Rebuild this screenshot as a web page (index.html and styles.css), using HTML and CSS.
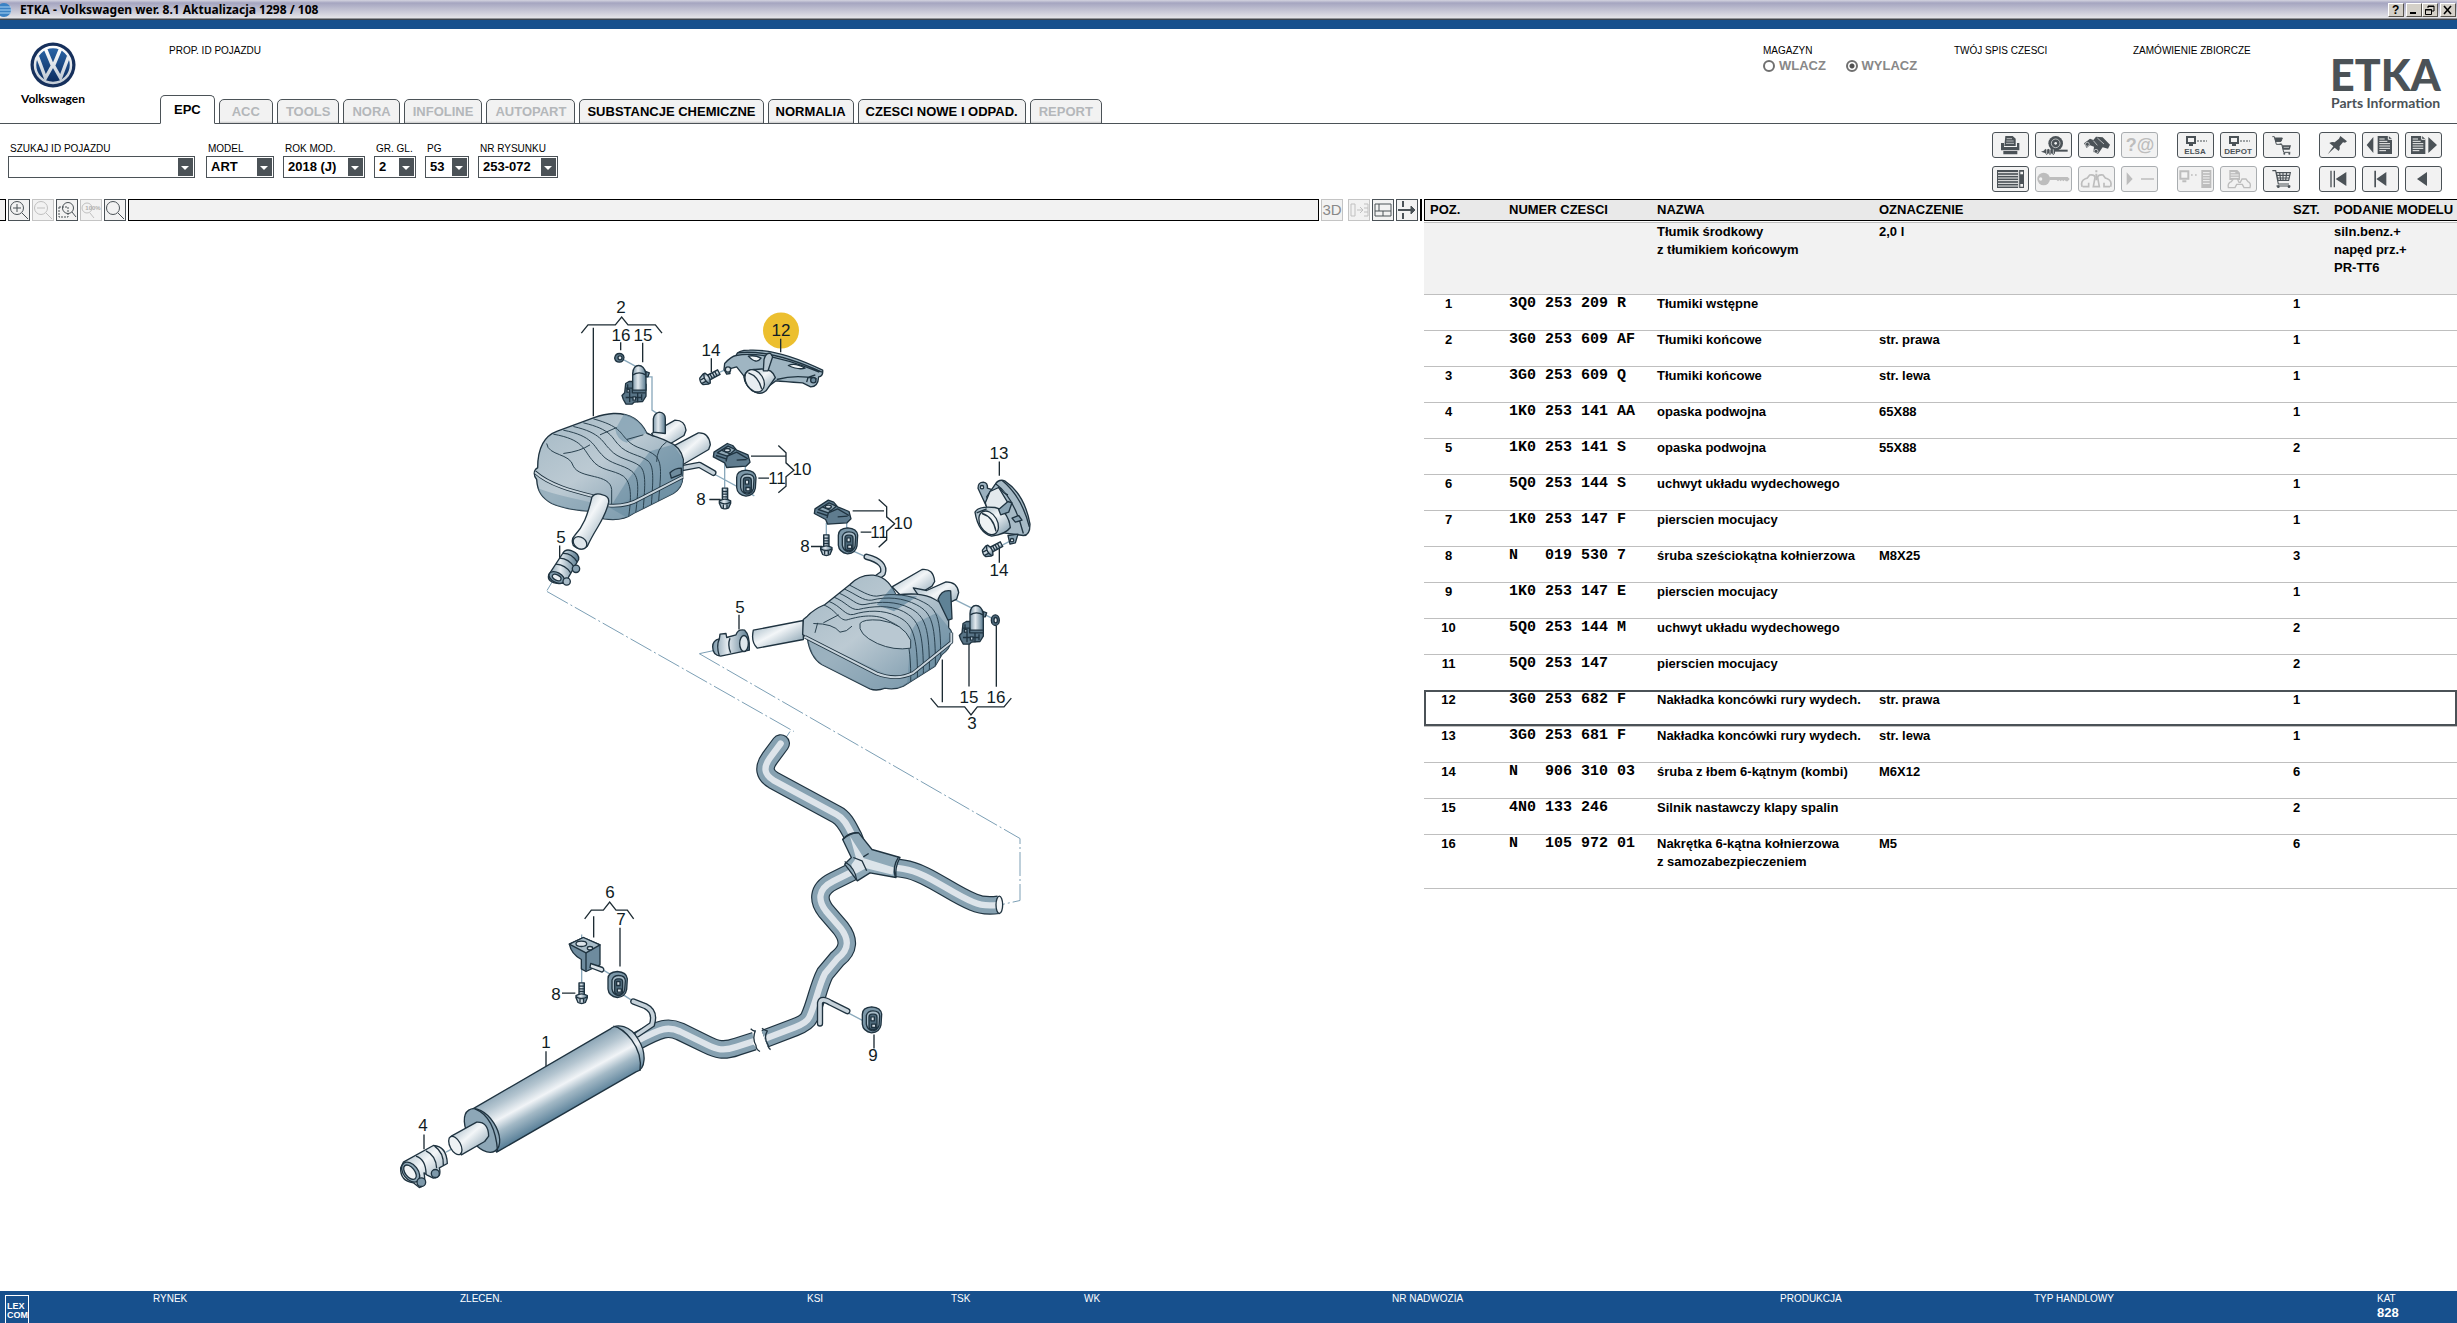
FILE: index.html
```html
<!DOCTYPE html>
<html lang="pl">
<head>
<meta charset="utf-8">
<title>ETKA - Volkswagen wer. 8.1 Aktualizacja 1298 / 108</title>
<link rel="stylesheet" href="styles.css">
</head>
<body>
<div class="titlebar">
  <svg class="globe" width="15" height="16" viewBox="0 0 15 16"><circle cx="7" cy="8" r="7" fill="#3b82c4"/><path d="M1 5h13M0 8h15M1 11h13" stroke="#a9d2f3" stroke-width="1"/></svg>
  <h1>ETKA - Volkswagen wer. 8.1 Aktualizacja 1298 / 108</h1>
  <div class="window-buttons">
    <button class="help" aria-label="Pomoc">?</button>
    <button aria-label="Minimalizuj"><svg width="12" height="10" viewBox="0 0 12 10"><path d="M2 8h6" stroke="#000" stroke-width="2"/></svg></button>
    <button aria-label="Przywróć"><svg width="12" height="10" viewBox="0 0 12 10"><path d="M4 3V1h6v5H8M4 1.5h6M1.500 4.500h6v5h-6zM1 5h7" fill="none" stroke="#000"/></svg></button>
    <button class="close" aria-label="Zamknij"><svg width="12" height="10" viewBox="0 0 12 10"><path d="M2 1l7 8M9 1L2 9" stroke="#000" stroke-width="1.600"/></svg></button>
  </div>
</div>

<header class="masthead">
  <div class="brand">
    <svg width="46" height="46" viewBox="0 0 46 46">
      <defs><linearGradient id="vw" x1="0" y1="0" x2="0" y2="1"><stop offset="0" stop-color="#2b66a8"/><stop offset="1" stop-color="#0b2a5c"/></linearGradient>
      <linearGradient id="chrome" x1="0" y1="0" x2="0" y2="1"><stop offset="0" stop-color="#fff"/><stop offset="1" stop-color="#c3ccd6"/></linearGradient></defs>
      <circle cx="23" cy="23" r="22.500" fill="#16305c"/>
      <circle cx="23" cy="23" r="18" fill="url(#vw)" stroke="url(#chrome)" stroke-width="2.500"/>
      <path d="M15.500 7L22 22.500h2L30.500 7M7.500 14.500L15.500 36L22 24.500h2L30.500 36L38.500 14.500" fill="none" stroke="url(#chrome)" stroke-width="3.400"/>
    </svg>
    <span>Volkswagen</span>
  </div>
  <div class="vehicle">
    <p class="caption">PROP. ID POJAZDU</p>
    <nav class="tabs">
      <button class="tab active">EPC</button>
      <button class="tab" disabled>ACC</button>
      <button class="tab" disabled>TOOLS</button>
      <button class="tab" disabled>NORA</button>
      <button class="tab" disabled>INFOLINE</button>
      <button class="tab" disabled>AUTOPART</button>
      <button class="tab">SUBSTANCJE CHEMICZNE</button>
      <button class="tab">NORMALIA</button>
      <button class="tab">CZESCI NOWE I ODPAD.</button>
      <button class="tab" disabled>REPORT</button>
    </nav>
  </div>
  <fieldset class="stock">
    <legend class="caption">MAGAZYN</legend>
    <label><input type="radio" name="stock"> WLACZ</label>
    <label><input type="radio" name="stock" checked> WYLACZ</label>
  </fieldset>
  <p class="caption">TWÓJ SPIS CZESCI</p>
  <p class="caption">ZAMÓWIENIE ZBIORCZE</p>
  <div class="etka"><strong>ETKA</strong><span>Parts Information</span></div>
</header>

<div class="controls">
  <form class="filters">
    <div class="field vin"><label for="vin">SZUKAJ ID POJAZDU</label><span class="pick"><select id="vin"><option></option></select></span></div>
    <div class="field model"><label for="model">MODEL</label><span class="pick"><select id="model"><option>ART</option></select></span></div>
    <div class="field year"><label for="year">ROK MOD.</label><span class="pick"><select id="year"><option>2018 (J)</option></select></span></div>
    <div class="field group"><label for="group">GR. GL.</label><span class="pick"><select id="group"><option>2</option></select></span></div>
    <div class="field sub"><label for="sub">PG</label><span class="pick"><select id="sub"><option>53</option></select></span></div>
    <div class="field plate"><label for="plate">NR RYSUNKU</label><span class="pick"><select id="plate"><option>253-072</option></select></span></div>
  </form>
  <div class="actions">
    <div class="action-group four">
      <button aria-label="Drukuj"><svg viewBox="3 3 105 72"><path d="M27 33h9v12h39V33h7v22H27zM34 57h42v10H34z"/><path d="M40 12h22l9 8v22H37z"/><path d="M44 20h16M43 27h22M42 34h24" class="cut thin"/></svg></button>
      <button aria-label="Części zużywalne"><svg viewBox="3 3 105 72"><circle cx="62" cy="34" r="22"/><circle cx="62" cy="34" r="13" class="cut thin"/><circle cx="62" cy="34" r="4" class="fillcut"/><path d="M28 53h70v6H28z"/><path d="M18 59l12-4V50l5 5 5-5 5 5 5-5 5 5 5-5v14l-5 5-5-5-5 5-5-5-5 5-5-6z"/><path d="M35 52v14M45 52v14M55 52v14" class="cut thin"/></svg></button>
      <button aria-label="Szukaj"><svg viewBox="3 3 105 72"><path d="M18 34l18-14 10 4 8-10 20 2 22 22-6 12-16-4-14 20-14-6 2-16-12-4-10 8z"/><circle cx="28" cy="37" r="6" class="cut thin"/><circle cx="54" cy="58" r="6" class="cut thin"/><path d="M46 26l12 14M58 18l20 18" class="cut thin"/></svg></button>
      <button disabled aria-label="Zapytanie"><svg viewBox="0 0 35 24"><text x="18" y="18" font-size="18" text-anchor="middle">?@</text></svg></button>
      <button aria-label="Lista"><svg viewBox="3 3 105 72"><path d="M15 12h81v54H15z"/><path d="M18 20h60M18 28h60M18 36h60M18 44h60M18 52h60M18 60h60M80 12v54" class="cut"/><path d="M85 17h8v8h-8zM85 54h8v8h-8z" class="fillcut"/></svg></button>
      <button disabled aria-label="Klucz"><svg viewBox="3 3 105 72"><circle cx="26" cy="39" r="19"/><circle cx="17" cy="39" r="5" class="fillcut"/><path d="M44 33h54l6 6-6 7h-5l-4-4-4 4-4-4-4 4-4-4-4 4-4-4H44z"/></svg></button>
      <button disabled aria-label="Informacja o pojeździe"><svg viewBox="3 3 105 72"><path d="M12 62q-5-18 10-24l6-2 7-9q20-2 15 13l-4 22h18l-4-22q-5-15 15-13l7 9 6 2q15 6 10 24M14 62h18v-12M96 62H78v-12" class="line" stroke-width="5"/><path d="M52 13h6v6h-6zM52 23h6v20h-6z"/></svg></button>
      <button disabled aria-label="Dalej"><svg viewBox="3 3 105 72"><path d="M17 19l18 20-18 19zM60 37h39v4H60z"/></svg></button>
    </div>
    <div class="action-group three">
      <button aria-label="ELSA"><svg viewBox="0 0 35 24"><path d="M9 4h8v6H9zM11 12h4" class="line" stroke-width="2"/><path d="M19 8h10" class="line" stroke-dasharray="2 1" stroke-width="1"/><text x="17" y="21" font-size="8" text-anchor="middle">ELSA</text></svg></button>
      <button aria-label="DEPOT"><svg viewBox="0 0 35 24"><path d="M9 4h8v6H9zM11 12h4" class="line" stroke-width="2"/><path d="M19 8h10" class="line" stroke-dasharray="2 1" stroke-width="1"/><text x="17" y="21" font-size="8" text-anchor="middle">DEPOT</text></svg></button>
      <button aria-label="Przenieś koszyk"><svg viewBox="3 3 105 72"><path d="M28 14h6l6 23h16M36 18h22l-4 10H38z" class="line" stroke-width="3"/><path d="M36 18h22l-4 11H38z"/><path d="M50 36h6l6 25h20" class="line" stroke-width="3"/><path d="M57 40h27l-4 13H60z"/><path d="M62 46h16" class="cut thin"/><circle cx="64" cy="65" r="3"/><circle cx="79" cy="65" r="3"/></svg></button>
      <button disabled aria-label="Serwer"><svg viewBox="3 3 105 72"><path d="M10 16h24v22H10zM16 46h12" class="line" stroke-width="6"/><path d="M42 25h5v4h-5zM54 25h5v4h-5zM73 12h30v54H73z"/><path d="M78 20h20M78 28h20M78 36h20M78 44h20M78 52h20" class="cut"/></svg></button>
      <button disabled aria-label="Dokument pojazdu"><svg viewBox="3 3 105 72"><path d="M28 12h24l8 8v22H28z"/><path d="M32 20h14M32 27h24M32 34h24" class="cut"/><path d="M25 65q-3-14 9-18l6-8h12l5 10h4l5-10h12l6 8q10 4 6 18H72l-5-10H50l-5 10z" class="fillcut line" stroke-width="4"/></svg></button>
      <button aria-label="Koszyk"><svg viewBox="3 3 105 72"><path d="M28 14h10l8 40h32M40 20h42l-5 23H45zM50 20l3 23M60 20v23M71 20l-3 23M42 28h38M43 36h36M40 60h42" class="line" stroke-width="3.500"/><circle cx="46" cy="62" r="4"/><circle cx="78" cy="62" r="4"/></svg></button>
    </div>
    <div class="action-group three">
      <button aria-label="Przypnij"><svg viewBox="3 3 105 72"><path d="M64 12l20 16-6 4-6-1-10 12q2 9-3 14L47 47 26 67l17-24-12-10q8-5 16-2l13-11z"/></svg></button>
      <button aria-label="Poprzedni dokument"><svg viewBox="3 3 105 72"><path d="M14 39l20-24v48zM47 12h33l10 9v45H47z"/><path d="M52 21h16M52 28h24M52 35h32M52 42h32M52 49h32M52 56h20M79 12v10h11" class="cut"/></svg></button>
      <button aria-label="Następny dokument"><svg viewBox="3 3 105 72"><path d="M96 39L70 15v48zM18 12h33l10 9v45H18z"/><path d="M23 21h16M23 28h24M23 35h32M23 42h32M23 49h32M23 56h20M50 12v10h11" class="cut"/></svg></button>
      <button aria-label="Początek"><svg viewBox="3 3 105 72"><path d="M34 14h4v50h-4zM44 14h4v50h-4zM50 39l32-21v42z"/></svg></button>
      <button aria-label="Pierwszy"><svg viewBox="3 3 105 72"><path d="M37 14h5v50h-5zM43 39l30-21v42z"/></svg></button>
      <button aria-label="Wstecz"><svg viewBox="3 3 105 72"><path d="M36 39l30-21v42z"/></svg></button>
    </div>
  </div>
</div>

<main>
  <section class="viewer">
    <div class="viewer-bar">
      <span class="stub"></span>
      <button aria-label="Powiększ"><svg viewBox="0 0 20 20"><circle cx="8" cy="8" r="6.500"/><path d="M13 13l6 6M8 4v8M4 8h8"/></svg></button>
      <button disabled aria-label="Pomniejsz"><svg viewBox="0 0 20 20"><circle cx="8" cy="8" r="6.500"/><path d="M13 13l6 6M4 8h8"/></svg></button>
      <button aria-label="Powiększ obszar"><svg viewBox="0 0 20 20"><path d="M2 7h9v10H2z" stroke-dasharray="2 1"/><circle cx="11" cy="8" r="5.500"/><path d="M15 12l4 5"/></svg></button>
      <button disabled aria-label="Skala 100%"><svg viewBox="0 0 20 20"><circle cx="6" cy="8" r="5"/><path d="M9 13l4 5"/><text x="12" y="10" font-size="6" text-anchor="middle">100%</text></svg></button>
      <button aria-label="Dopasuj"><svg viewBox="0 0 20 20"><circle cx="8" cy="8" r="6.500"/><path d="M13 13l6 6"/></svg></button>
      <span class="status"></span>
      <button class="plain" disabled>3D</button>
      <button disabled aria-label="Ukryj listę"><svg viewBox="0 0 20 20"><path d="M2 4h4v12H2zM8 10h5M11 7l3 3-3 3M15 4h4v12h-4M15 8h4M15 12h4"/></svg></button>
      <button aria-label="Układ okien"><svg viewBox="0 0 20 20"><path d="M2 4h16v12H2zM2 11h16M10 11v5M6 4v7"/></svg></button>
      <button aria-label="Przesuń podział"><svg viewBox="0 0 20 20"><path d="M1 10h15M6 1v6M6 13v6" stroke-width="2"/><path d="M14 6l4 4-4 4z" fill="#4b5257"/></svg></button>
      <span class="splitter"></span>
    </div>
    <svg class="diagram" viewBox="0 222 1424 1069" role="img" aria-label="Układ wydechowy">
      <defs>
        <linearGradient id="tube" x1="0" y1="0" x2="1" y2="1"><stop offset="0" stop-color="#8fa9b8"/><stop offset=".45" stop-color="#f3f6f8"/><stop offset="1" stop-color="#7593a5"/></linearGradient>
        <linearGradient id="shell" x1="0" y1="0" x2="1" y2="1"><stop offset="0" stop-color="#a3b8c4"/><stop offset=".45" stop-color="#bccad3"/><stop offset="1" stop-color="#6d8fa4"/></linearGradient>
        <linearGradient id="cyl" gradientUnits="userSpaceOnUse" x1="470" y1="325" x2="548" y2="467"><stop offset="0" stop-color="#86a1b2"/><stop offset=".25" stop-color="#b4c5d0"/><stop offset=".5" stop-color="#f1f4f7"/><stop offset=".7" stop-color="#a3b9c6"/><stop offset="1" stop-color="#587f98"/></linearGradient>
        <linearGradient id="metal" x1="0" y1="0" x2="1" y2="0"><stop offset="0" stop-color="#7d98a9"/><stop offset=".4" stop-color="#e3eaef"/><stop offset="1" stop-color="#56788d"/></linearGradient>
        <g id="bolt" class="ink" fill="url(#metal)"><path d="M-8-30h16v36h-16z"/><path d="M-8-20h16M-8-12h16M-8-4h16" fill="none"/><path d="M-17 8q17-10 34 0v7l-6 14q-11 6-22 0l-6-14z"/><path d="M-17 12q17 10 34 0M-5 16v14M6 16v14" fill="none"/></g>
        <g id="grommet" class="ink"><path d="M-30-18q0-20 28-22q28 2 30 22l-2 32q-4 22-28 24q-26-4-28-26z" fill="#7b97a8"/><path d="M-18-14q4-14 20-14q20 0 20 16l-2 28q-6 16-20 16q-16-4-18-20z" fill="#a9bdc9"/><rect x="-10" y="-18" width="24" height="46" rx="9" fill="#4d697a"/><path d="M-4-10h10v12h-10zM-2 12h12v10h-12z" fill="#d7e0e6"/></g>
        <g id="hanger" class="ink"><path d="M0 20l2-14 40-26 16 6 12 14 34 14 6 22-12 12-58 4-6-14z" fill="#5f7c8f"/><path d="M12 8l32-20 22 10-24 20z" fill="#8fa7b5"/><path d="M42 18l28-12 34 20M42 18l-4 16M70 30l30-2M8 16l30 10M24 0l28 12" fill="none"/><ellipse cx="42" cy="0" rx="9" ry="5" fill="#d3dde4"/></g>
        <g id="valve" class="ink"><path d="M-8 20l10-6h40l11 8v36l-10 16-26 2-6 6h-18l-8-14-4-12 8-8z" fill="#587486"/><path d="M13-10q2-24 18-24t22 24v50h-40z" fill="url(#metal)"/><path d="M14-6q18-12 38 0M-8 34h20v14h40M4 46v30M28 48v28M-8 62h46M40 52v18M-2 22v26" fill="none"/><path d="M-4 38h8v8h-8zM14 60h8v10h-8z" fill="#c2cfd8"/><path d="M53-16l10 4-4 12h-6z" fill="#6c8798"/></g>
        <g id="clamp" class="ink"><path d="M-46 34L-4-30Q4-46 24-38Q46-30 44-12L14 40Q8 62-16 60Q-52 56-46 34Z" fill="url(#metal)"/><ellipse cx="-22" cy="42" rx="25" ry="15" transform="rotate(28 -22 42)" fill="#7f9aab"/><ellipse cx="-22" cy="42" rx="14" ry="8" transform="rotate(28 -22 42)" fill="#e8edf1"/><path d="M-4-30q26-2 44 26M-24 2q28 2 44 26M-12-16q26 2 42 26" fill="none"/><circle cx="36" cy="16" r="11" fill="#89a2b2"/><circle cx="8" cy="54" r="11" fill="#a9bcc8"/></g>
        <g id="pipes" fill="none">
          <path d="M662 72L630 115C608 145 614 166 640 182L830 285C855 298 865 325 880 352L905 415" stroke-linecap="round"/>
          <path d="M905 420C950 440 990 442 1030 448C1100 458 1170 520 1240 548Q1270 562 1316 556"/>
          <path d="M900 445L820 485C770 510 775 545 798 575L842 626C868 660 868 690 832 718L795 762C775 800 768 850 748 893Q740 910 705 923L614 958"/>
          <path d="M586 964L530 982C490 996 470 990 440 975L360 936C325 920 305 925 230 965"/>
        </g>
        <clipPath id="leftBody"><path id="leftShape" d="M113 535C100 540 100 560 110 570C112 605 125 625 155 642C185 656 225 662 265 665L312 688Q365 697 400 672L520 612Q550 592 548 560L550 510Q542 470 505 457C475 442 455 440 440 430C420 390 390 370 340 372Q315 373 280 385L172 425C130 440 113 480 113 535Z"/></clipPath>
        <clipPath id="rightBody"><path id="rightShape" d="M340 600L352 590Q370 570 405 555L480 495Q510 464 550 467C590 472 605 500 618 526C660 522 700 520 735 540Q770 555 776 600L776 625Q792 640 784 665Q778 690 756 705L735 740L640 800Q615 812 585 806Q560 816 540 808L395 735Q360 712 352 655L338 645Z"/></clipPath>
      </defs>

      <circle cx="781" cy="331" r="18" fill="#ecbf2f"/>

      <g class="dash">
        <path d="M547 592L794 732"/><path d="M699 654L1020 839V901L1002 905"/><path d="M790 732L786 738M547 591L556 576M700 654L714 651"/>
      </g>

      <g transform="translate(500 290) scale(.333333)">
        <g class="leader"><path d="M244 131l20-25h82l19-23 19 23h82l20 25M280 115v265M362 158v24M428 160v58M634 206v42M842 148v40M753 500h104M835 468l23 22v30l24 22-24 20v28l-23 20M775 566h32M628 630h34M179 768v44"/></g>
        <g class="guide"><path d="M366 208l40 22M440 262h16v100l40 26M674 510v85M736 520v26M645 555l118 64M660 248l26-12"/></g>
        <g class="ink">
          <path d="M455 432l70-40q30 0 33 30l-6 16-70 42z" fill="url(#tube)"/>
          <path d="M460 428v-40q2-16 18-20 18 2 18 20v44z" fill="url(#metal)"/>
          <path d="M520 470l75-40q32-2 36 36l-5 14-82 48z" fill="url(#tube)"/>
          <path d="M550 535L598 526L640 550" class="rod-edge"/><path d="M550 535L598 526L640 550" class="rod"/>
          <use href="#leftShape" fill="url(#shell)"/>
        </g>
        <g clip-path="url(#leftBody)">
          <path d="M380 360q40 20 60 70l-60 30q-30-10-34-40z" fill="#7f9eb1" opacity=".7"/>
          <path d="M100 590C170 620 240 630 280 640L330 655L550 560V720H100z" fill="#7a99ac" opacity=".5"/>
          <path d="M330 655l50-80 70-90 70-20 40 60-20 90-140 80z" fill="#5f859b" opacity=".5"/>
          <path d="M140 462C145 500 210 490 220 530C240 570 330 550 335 600V650" class="fine"/>
          <g class="fine">
            <path d="M160 434C250 450 250 480 275 510C300 545 340 540 370 560C395 580 395 620 385 690"/>
            <path d="M190 422C280 440 280 470 305 495C330 525 370 525 395 545C420 565 415 600 405 690"/>
            <path d="M220 411C305 430 308 460 330 480C355 510 395 510 420 530C440 550 435 590 428 680"/>
            <path d="M250 400C335 420 335 445 355 465C380 495 420 495 445 515C465 535 458 580 452 680"/>
            <path d="M280 388C360 410 360 430 380 450C405 480 440 475 468 500C490 525 480 570 474 660"/>
            <path d="M190 492q50-6 80-26M300 436l50-22M380 450l50-14"/>
            <path d="M500 457q-30 20-30 60"/>
          </g>
        </g>
        <g class="ink" fill="none"><path d="M105 548C150 588 220 605 280 620M325 648Q380 652 420 628L548 562" class="seam-edge"/><path d="M105 548C150 588 220 605 280 620M325 648Q380 652 420 628L548 562" class="seam"/></g>
        <g class="ink"><path d="M276 622q10-14 32-6 20 4 18 22C315 690 290 710 262 770q-20 18-42-2-8-18 4-30C250 710 262 680 276 622z" fill="url(#tube)"/><ellipse cx="240" cy="760" rx="22" ry="17" transform="rotate(35 240 760)" fill="#dfe6eb"/>
        <path d="M510 550q14-14 34-14v18l-30 12z" fill="#6f8c9e"/></g>
        <use href="#clamp" x="192" y="822"/>
        <use href="#valve" x="385" y="262"/>
        <g class="ink"><path d="M344 206q2-14 14-14t14 12q-2 14-14 14t-14-12z" fill="#5d798a"/><circle cx="360" cy="205" r="6" fill="#dbe3e8"/>
          <path d="M674 222q20-22 34-24 4-16 40-16 90-4 220 60 2 18-12 20-2 30-24 30l-24-12q-60-4-80-6l-22 16q-20 24-40 18-26-8-34-48l-22-28-22 6 2 14-10 2-8-14z" fill="#9fb5c2"/>
          <path d="M708 198q90-16 250 50M712 190q100-12 254 58M830 270q60-16 120-2M920 278l4-14 22-8" fill="none"/>
          <path d="M745 200q20-4 38 6-14 20-38-6zM865 228q20-10 50 8-20 6-50-8z" fill="#f3f6f8"/>
          <path d="M732 262q6-24 34-22 50-8 60 24l-28 40q-20 16-44-4-20-16-22-38z" fill="url(#tube)"/>
          <ellipse cx="764" cy="274" rx="26" ry="36" transform="rotate(-32 764 274)" fill="#e8edf1"/><path d="M745 250q30 10 40 48" fill="none"/>
          <path d="M792 210q6-22 20-18l6 10-14 42h-14z" fill="#b7c7d1"/><circle cx="684" cy="240" r="8" fill="#d6dfe5"/><circle cx="940" cy="272" r="8" fill="#6f8da0"/></g>
        <use href="#bolt" transform="translate(630 262) rotate(62)"/>
        <use href="#hanger" x="640" y="482"/><use href="#grommet" x="740" y="582"/><use href="#bolt" x="675" y="626"/>
      </g>

      <g transform="translate(690 420) scale(.333333)">
        <g class="leader"><path d="M488 274h94M566 240l24 22v30l24 21-24 22v26l-24 22M512 338h32M363 381h34M147 586v44M928 126v43M928 385v45M757 720v128M837 665v136M919 618v184M722 836l22 26h80l19 24 19-24h80l22-26"/></g>
        <g class="guide"><path d="M409 310v45M470 310v24M490 395l40 18M790 538l120 60M938 376l24-12"/></g>
        <g class="ink">
          <path d="M530 412Q590 428 578 462L556 478" class="rod-edge"/><path d="M530 412Q590 428 578 462L556 478" class="rod"/>
          <path d="M606 502l90-52q34-4 38 36l-8 14-76 46z" fill="url(#tube)"/>
          <path d="M670 505l40 8 58-26q34 0 38 32l-6 20-80 40z" fill="url(#tube)"/>
          <path d="M190 632L340 603V660L202 686Q182 668 190 632z" fill="url(#tube)"/>
          <use href="#rightShape" fill="url(#shell)"/>
          <path d="M744 540q10-30 38-26l4 84-12 4z" fill="#5f8296"/>
        </g>
        <g clip-path="url(#rightBody)">
          <path d="M560 556l52-60 10 30 60 5-70 44z" fill="#6b8fa4" opacity=".8"/>
          <path d="M352 655l260 120 60-8 110-120v160H352z" fill="#7b99ab" opacity=".5"/>
          <path d="M660 680q-10-30 20-70l60-30 50 60-50 110-90 60z" fill="#5f859b" opacity=".45"/>
          <g class="fine">
            <path d="M400 556C440 570 450 610 475 600C510 590 560 580 600 606C640 625 665 640 662 800"/>
            <path d="M415 545C455 560 465 590 490 585C530 572 580 570 620 590C665 610 685 640 682 790"/>
            <path d="M430 532C470 548 480 572 505 570C545 560 600 555 640 576C685 600 702 630 700 780"/>
            <path d="M445 520C485 536 500 560 525 555C570 545 620 545 660 566C705 590 720 620 718 770"/>
            <path d="M460 507C500 525 520 545 545 542C590 530 640 535 680 556C725 580 738 610 736 760"/>
            <path d="M475 495C515 515 535 530 560 530C610 520 660 525 700 548C745 570 754 600 752 750"/>
          </g>
          <path d="M510 612q10-14 60-10 70 10 92 60v24q-50 8-100-14-60-28-52-60z" fill="#b9c8d2" stroke="#29404e" stroke-width="3"/>
          <path d="M370 612q60 0 80 26 20 0 36-18M375 640l8-30M400 610l46-24" class="fine"/>
        </g>
        <g class="ink" fill="none"><path d="M345 652L560 762Q620 785 670 760L784 668V640" class="seam-edge"/><path d="M345 652L560 762Q620 785 670 760L784 668V640" class="seam"/></g>
        <g class="ink"><path d="M68 682q0-20 20-24l2-14 18-2 2 12 28-8q6-18 26-14 16 14 14 60l-86 18q-24-2-24-28z" fill="url(#metal)"/><ellipse cx="162" cy="672" rx="13" ry="24" fill="#dfe7ec"/><path d="M88 658q-10 20 0 52M120 656q-8 20 2 44" fill="none"/>
          <path d="M864 206q0-18 16-18 14 2 12 18l26 8-30 44z" fill="#9ab0be"/><circle cx="876" cy="203" r="5" fill="#e5ebef"/><path d="M890 232l26-38q10-16 28-10 60 40 76 130 0 34-20 34l-60-8z" fill="#a6bac6"/><path d="M916 192q56 40 84 150M936 182q60 50 82 140" fill="none"/><path d="M886 250l14-34 26-12 30 50-20 60-40-30z" fill="#e3e9ed"/>
          <path d="M855 278q10-20 60-14 40 10 46 60-14 20-56 26-40-10-50-72z" fill="url(#tube)"/><ellipse cx="896" cy="310" rx="26" ry="38" transform="rotate(-30 896 310)" fill="#eef2f4"/><path d="M876 282q34 10 42 54M860 280l30-12" fill="none"/>
          <path d="M926 270l28-24 12 4-10 28-24 8zM966 296l20-8 10 14-20 6zM930 206q10 16 24 20M954 348l30-4-8 26-16 4z" fill="#89a3b3"/><circle cx="966" cy="362" r="5" fill="#e5ebef"/>
          <ellipse cx="916" cy="602" rx="12" ry="16" fill="#4e6b7d"/><ellipse cx="917" cy="602" rx="5" ry="8" fill="#e5ebef"/></g>
        <use href="#valve" x="827" y="592"/>
        <use href="#bolt" transform="translate(908 388) rotate(62)"/>
        <use href="#hanger" x="373" y="262"/><use href="#grommet" x="475" y="365"/><use href="#bolt" x="409" y="376"/>
      </g>

      <g transform="translate(560 720) scale(.333333)">
        <g class="leader"><path d="M74 598l20-26h36l19-24 19 24h34l19 26M101 590v64M180 625v116M6 821h40M942 945v42"/></g>
        <g class="guide"><path d="M65 645v145M130 752l24 14M190 826l28 18M860 878l50 26"/></g>
        <use href="#pipes" stroke="#1f3340" stroke-width="56"/>
        <use href="#pipes" stroke="#86a1b1" stroke-width="49"/>
        <use href="#pipes" stroke="#dde4ea" stroke-width="19"/>
        <g class="ink"><path d="M848 360q20-24 48-20l40 50 84 24q-16 30-12 60l-78-14-38 24-38-50 20-20z" fill="#8fa9b8"/><path d="M870 350l42 66 90 28-4 22-80-20-36 20-8-30 14-20z" fill="#dce4ea" stroke="none"/><path d="M848 360q24-22 48-20M1016 412q-20 30-10 62M854 426q32 20 36 56M880 414l26 10 14 30M910 412l16-10" fill="none"/></g>
        <ellipse cx="1318" cy="556" rx="10" ry="26" class="ink" fill="#f4f6f8"/>
        <path d="M572 928q14 12 34-2-8 20 4 40 2 16 12 26-16-8-32 4-2-16-12-24 6-24-6-44z" fill="#fff"/><path d="M572 928q8 8 14 6-10 24 2 44 0 12 12 18M606 926q10 8 16 8-12 20 2 42 2 12 8 14" fill="none" class="ink"/>
        <path d="M220 846L256 860Q288 876 276 915L232 945" class="rod-edge"/><path d="M220 846L256 860Q288 876 276 915L232 945" class="rod"/>
        <path d="M780 912V850Q784 832 812 850L862 875" class="rod-edge"/><path d="M780 912V850Q784 832 812 850L862 875" class="rod"/>
        <g class="ink"><path d="M28 674l42-20 50 22v60l-42 20-14-8v-28q-30-16-36-46z" fill="#6e8b9e"/><path d="M28 674l42-20 50 22-42 24z" fill="#a8bcc8"/><path d="M78 700v54" fill="none"/><ellipse cx="64" cy="673" rx="16" ry="8" fill="#dce4ea"/><ellipse cx="90" cy="686" rx="8" ry="5" fill="#dce4ea"/><path d="M92 732l36 12q8 8-2 14l-36-14z" fill="#dce4ea"/></g>
        <use href="#grommet" x="174" y="796"/><use href="#bolt" x="65" y="820"/><use href="#grommet" x="937" y="902"/>
      </g>

      <g transform="translate(380 960) scale(.333333)">
        <g class="leader"><path d="M498 275v45M132 525v44"/></g>
        <path d="M198 578l34-18" class="guide"/>
        <g class="ink">
          <path d="M272 452L690 209C710 190 752 198 775 240C800 280 798 330 768 337L350 578Z" fill="url(#cyl)"/>
          <path d="M700 200C730 205 790 260 780 334" fill="none"/>
          <ellipse cx="306" cy="513" rx="73" ry="42" transform="rotate(57 306 513)" fill="#8da7b7"/>
          <path d="M285 448q60 24 68 128" fill="none"/>
          <path d="M214 530L290 488Q325 486 326 530L314 546L244 586Z" fill="url(#tube)"/>
          <ellipse cx="226" cy="558" rx="16" ry="30" transform="rotate(-28 226 558)" fill="#eef2f4"/>
          <path d="M70 608L160 558Q200 560 202 612L178 625Q186 655 160 656L140 646L132 640Q140 680 118 684L100 670Q60 665 62 625Z" fill="url(#tube)"/>
          <ellipse cx="92" cy="638" rx="22" ry="34" transform="rotate(-38 92 638)" fill="#8fa8b7"/><ellipse cx="90" cy="638" rx="14" ry="25" transform="rotate(-38 90 638)" fill="#f1f4f6"/>
          <path d="M108 590q30 10 30 54M138 574q30 14 32 52M164 560q28 20 26 58" fill="none"/><circle cx="124" cy="668" r="13" fill="#7e99aa"/><circle cx="166" cy="642" r="12" fill="#7e99aa"/>
        </g>
      </g>

      <g class="callouts">
        <text x="621" y="313">2</text><text x="621" y="341">16</text><text x="643" y="341">15</text><text x="781" y="336">12</text><text x="711" y="356">14</text>
        <text x="802" y="475">10</text><text x="777" y="484">11</text><text x="701" y="505">8</text><text x="561" y="543">5</text>
        <text x="805" y="552">8</text><text x="879" y="538">11</text><text x="903" y="529">10</text><text x="999" y="459">13</text><text x="999" y="576">14</text><text x="740" y="613">5</text>
        <text x="969" y="703">15</text><text x="996" y="703">16</text><text x="972" y="729">3</text><text x="610" y="898">6</text><text x="621" y="925">7</text><text x="873" y="1061">9</text>
        <text x="546" y="1048">1</text><text x="423" y="1131">4</text><text x="556" y="1000">8</text>
      </g>
    </svg>
  </section>

  <section class="list">
    <table>
      <colgroup><col class="c-pos"><col class="c-num"><col class="c-name"><col><col class="c-qty"><col class="c-model"></colgroup>
      <thead><tr><th>POZ.</th><th>NUMER CZESCI</th><th>NAZWA</th><th>OZNACZENIE</th><th>SZT.</th><th>PODANIE MODELU</th></tr></thead>
      <tbody>
        <tr class="group-row"><td></td><td></td><td>Tłumik środkowy<br>z tłumikiem końcowym</td><td>2,0 l</td><td></td><td>siln.benz.+<br>napęd prz.+<br>PR-TT6</td></tr>
        <tr><td>1</td><td>3Q0 253 209 R</td><td>Tłumiki wstępne</td><td></td><td>1</td><td></td></tr>
        <tr><td>2</td><td>3G0 253 609 AF</td><td>Tłumiki końcowe</td><td>str. prawa</td><td>1</td><td></td></tr>
        <tr><td>3</td><td>3G0 253 609 Q</td><td>Tłumiki końcowe</td><td>str. lewa</td><td>1</td><td></td></tr>
        <tr><td>4</td><td>1K0 253 141 AA</td><td>opaska podwojna</td><td>65X88</td><td>1</td><td></td></tr>
        <tr><td>5</td><td>1K0 253 141 S</td><td>opaska podwojna</td><td>55X88</td><td>2</td><td></td></tr>
        <tr><td>6</td><td>5Q0 253 144 S</td><td>uchwyt układu wydechowego</td><td></td><td>1</td><td></td></tr>
        <tr><td>7</td><td>1K0 253 147 F</td><td>pierscien mocujacy</td><td></td><td>1</td><td></td></tr>
        <tr><td>8</td><td>N   019 530 7</td><td>śruba sześciokątna kołnierzowa</td><td>M8X25</td><td>3</td><td></td></tr>
        <tr><td>9</td><td>1K0 253 147 E</td><td>pierscien mocujacy</td><td></td><td>1</td><td></td></tr>
        <tr><td>10</td><td>5Q0 253 144 M</td><td>uchwyt układu wydechowego</td><td></td><td>2</td><td></td></tr>
        <tr><td>11</td><td>5Q0 253 147</td><td>pierscien mocujacy</td><td></td><td>2</td><td></td></tr>
        <tr class="selected"><td>12</td><td>3G0 253 682 F</td><td>Nakładka koncówki rury wydech.</td><td>str. prawa</td><td>1</td><td></td></tr>
        <tr><td>13</td><td>3G0 253 681 F</td><td>Nakładka koncówki rury wydech.</td><td>str. lewa</td><td>1</td><td></td></tr>
        <tr><td>14</td><td>N   906 310 03</td><td>śruba z łbem 6-kątnym (kombi)</td><td>M6X12</td><td>6</td><td></td></tr>
        <tr><td>15</td><td>4N0 133 246</td><td>Silnik nastawczy klapy spalin</td><td></td><td>2</td><td></td></tr>
        <tr><td>16</td><td>N   105 972 01</td><td>Nakrętka 6-kątna kołnierzowa<br>z samozabezpieczeniem</td><td>M5</td><td>6</td><td></td></tr>
      </tbody>
    </table>
  </section>
</main>

<footer>
  <div class="lexcom"><span>LEX</span><span>COM</span></div>
  <span>RYNEK</span><span>ZLECEN.</span><span>KSI</span><span>TSK</span><span>WK</span><span>NR NADWOZIA</span><span>PRODUKCJA</span><span>TYP HANDLOWY</span>
  <span>KAT<strong>828</strong></span>
</footer>
</body>
</html>
```
FILE: styles.css
```css
:root {
  --blue: #17508d;
  --slate: #4b5257;
  --muted: #b4b7ba;
  --panel: #f2f2f2;
}
* { box-sizing: border-box; }
body {
  margin: 0;
  min-height: 100vh;
  display: flex;
  flex-direction: column;
  background: #fff;
  color: #000;
  font: bold 13px/18px "Liberation Sans", Arial, sans-serif;
}
button, select { font: inherit; color: inherit; }
p { margin: 0; }
.caption { font-size: 10px; font-weight: normal; line-height: 12px; }

/* Window title */
.titlebar {
  display: flex;
  align-items: center;
  height: 29px;
  border-bottom: 9px solid var(--blue);
  background: linear-gradient(#d4d4e0, #a5a5c0 3px, #e4e4e8 18px, #40444a 19px);
}
.globe { margin-left: -3px; }
.titlebar h1 {
  flex: 1;
  margin: 0 0 0 8px;
  font: bold 12px/18px "Noto Sans", "Open Sans", sans-serif;
}
.window-buttons { display: flex; padding-right: 1px; }
.window-buttons button {
  display: flex;
  width: 16px;
  height: 14px;
  padding: 1px;
  border: 1px solid;
  border-color: #fff #55524c #55524c #fff;
  background: #d4d0c8;
  font-size: 12px;
  line-height: 10px;
}
.window-buttons .help { margin-right: 2px; padding: 1px 3px; }
.window-buttons .close { margin-left: 2px; }

/* Masthead */
.masthead {
  display: grid;
  grid-template-columns: 160px 1fr 191px 179px 197px 112px;
  padding: 0 15px 0 0;
  border-bottom: 1px solid var(--slate);
}
.masthead > .caption { padding-top: 16px; }
.brand {
  display: flex;
  flex-direction: column;
  align-items: center;
  width: 106px;
  padding-top: 13px;
  font: bold 12px/18px Lato, sans-serif;
  gap: 2px;
}
.vehicle { display: flex; flex-direction: column; justify-content: space-between; padding-top: 16px; }
.vehicle .caption { padding-left: 9px; }
.tabs { display: flex; align-items: flex-end; gap: 4px; margin-top: 38px; margin-bottom: -1px; }
.tab {
  height: 25px;
  padding: 1px 7px 0;
  border: 1px solid var(--slate);
  border-radius: 5px 5px 0 0;
  background: linear-gradient(var(--panel) 21px, #c9c9c9);
  white-space: nowrap;
}
.tab:disabled { padding: 1px 8px 0; color: var(--muted); }
.tab.active { height: 29px; padding: 0 13px; border-bottom-color: #fff; background: #fff; }
.tab.active + .tab { padding: 1px 12px 0; }
.stock { min-width: 0; margin: 0; padding: 16px 0 0; border: 0; color: #888; }
.stock legend { float: left; width: 100%; padding: 0; color: #000; }
.stock label { display: inline-flex; align-items: center; gap: 4px; margin-right: 16px; }
.stock input {
  appearance: none;
  width: 12px;
  height: 12px;
  margin: 0;
  border: 2px solid #707070;
  border-radius: 50%;
}
.stock input:checked { background: radial-gradient(#505050 2px, #fff 3px); }
.etka { display: flex; flex-direction: column; padding-top: 24px; color: var(--slate); white-space: nowrap; }
.etka strong { font: 900 43px/44px Lato, sans-serif; }
.etka span { padding-left: 1px; font: bold 14px/12px Lato, sans-serif; }

/* Filters and actions */
.controls { display: flex; justify-content: space-between; padding: 8px 15px 7px 8px; }
.filters { display: flex; gap: 9px; padding-top: 11px; }
.field label { display: block; padding-left: 2px; font-size: 10px; font-weight: normal; line-height: 12px; white-space: nowrap; }
.pick { position: relative; display: block; height: 22px; margin-top: 1px; }
.pick select {
  appearance: none;
  width: 100%;
  height: 22px;
  padding: 0 18px 0 4px;
  border: 1px solid var(--slate);
  border-radius: 0;
  background: #fff;
}
.pick::before {
  content: "";
  position: absolute;
  top: 2px;
  right: 2px;
  bottom: 2px;
  width: 15px;
  background: var(--slate);
  pointer-events: none;
}
.pick::after {
  content: "";
  position: absolute;
  top: 10px;
  right: 6px;
  border: 4px solid transparent;
  border-top-color: #fff;
  border-bottom: 0;
  pointer-events: none;
}
.vin { width: 187px; margin-right: 2px; }
.model { width: 68px; }
.year { width: 82px; }
.group { width: 42px; }
.sub { width: 44px; }
.plate { width: 80px; }
.actions { display: flex; gap: 19px; }
.action-group { display: grid; gap: 8px 6px; }
.four { grid-template-columns: repeat(4, 37px); }
.three { grid-template-columns: repeat(3, 37px); }
.action-group button {
  height: 26px;
  padding: 0;
  border: 1px solid var(--slate);
  border-radius: 3px;
  background: var(--panel);
}
.action-group svg { display: block; width: 35px; height: 24px; fill: var(--slate); stroke: none; }
.action-group .line { fill: none; stroke: var(--slate); }
.action-group .cut { fill: none; stroke: var(--panel); stroke-width: 3px; }
.action-group .thin { stroke-width: 2px; }
.action-group .fillcut { fill: var(--panel); }
.action-group button:disabled { border-color: #a9adb0; }
.action-group button:disabled svg { fill: #bdbdbd; }
.action-group button:disabled .line { stroke: #bdbdbd; }
.action-group button:disabled .fillcut { fill: var(--panel); }

/* Drawing and parts list */
main { flex: 1; display: grid; grid-template-columns: 1424fr 1033fr; }
.viewer { display: flex; flex-direction: column; min-width: 0; }
.viewer-bar { display: flex; gap: 2px; height: 22px; padding-right: 2px; }
.viewer-bar button { width: 22px; padding: 0; border: 1px solid var(--slate); background: var(--panel); }
.viewer-bar svg { display: block; width: 20px; height: 20px; fill: none; stroke: var(--slate); stroke-width: 1px; }
.viewer-bar button:disabled { border-color: #c4c4c4; color: #888; }
.viewer-bar button:disabled svg { stroke: #c0c0c0; }
.viewer-bar svg text { fill: #b0b0b0; stroke: none; }
.viewer-bar .plain { margin-right: 3px; font-weight: normal; font-size: 15px; }
.stub { width: 6px; border: 1px solid #000; border-left: 0; background: var(--panel); }
.status { flex: 1; border: 1px solid #000; background: var(--panel); }
.splitter { width: 2px; background: #000; }
.diagram { flex: 1; width: 100%; min-height: 0; contain: size; }
.ink { stroke: #1f3340; stroke-width: 4px; stroke-linejoin: round; }
.seam-edge { stroke: #1f3340; stroke-width: 11px; }
.seam { stroke: #c9d5dd; stroke-width: 6px; }
.leader { fill: none; stroke: #1d2b33; stroke-width: 4px; }
.guide { fill: none; stroke: #8aa9bc; stroke-width: 4px; }
.dash { fill: none; stroke: #7c9fb5; stroke-width: 1px; stroke-dasharray: 24 3 2 3; }
.fine { fill: none; stroke: #29404e; stroke-width: 3px; }
.rod-edge { fill: none; stroke: #1f3340; stroke-width: 19px; stroke-linecap: round; }
.rod { fill: none; stroke: #c6d2da; stroke-width: 11px; stroke-linecap: round; }
.callouts { font-size: 17px; font-weight: normal; text-anchor: middle; fill: #101c24; }

.list { min-width: 0; }
table { width: 100%; border-collapse: separate; border-spacing: 0; table-layout: fixed; border-bottom: 1px solid #bfbfbf; }
.c-pos { width: 85px; }
.c-num { width: 148px; }
.c-name { width: 222px; }
.c-qty { width: 41px; }
.c-model { width: 123px; }
th {
  height: 22px;
  padding: 0;
  border: solid #000;
  border-width: 1px 0;
  background: #e9e9e9;
  text-align: left;
  white-space: nowrap;
}
th:first-child { padding-left: 5px; border-left-width: 1px; }
tbody::before { content: ""; display: block; height: 1px; }
td { padding: 0 0 17px; border-top: 1px solid #bfbfbf; vertical-align: top; white-space: nowrap; }
td:first-child { padding-right: 36px; text-align: center; }
td:nth-child(2) { font: bold 15px/18px "Liberation Mono", "Courier New", monospace; white-space: pre; }
.group-row td { background: var(--panel); }
.selected { outline: 2px solid var(--slate); outline-offset: -2px; }

/* Footer */
footer {
  display: grid;
  grid-template-columns: 153fr 307fr 347fr 144fr 133fr 308fr 388fr 254fr 343fr 80fr;
  height: 32px;
  padding-top: 2px;
  background: var(--blue);
  color: #fff;
  font-size: 10px;
  font-weight: normal;
  line-height: 12px;
}
footer strong { display: block; font-size: 13px; line-height: 16px; }
.lexcom {
  display: flex;
  flex-direction: column;
  width: 24px;
  height: 28px;
  margin: 2px 0 0 5px;
  padding: 6px 0 0 1px;
  border: 1px solid #fff;
  border-width: 1px 1px 0;
  font-weight: bold;
  font-size: 9px;
  line-height: 9px;
}
```
